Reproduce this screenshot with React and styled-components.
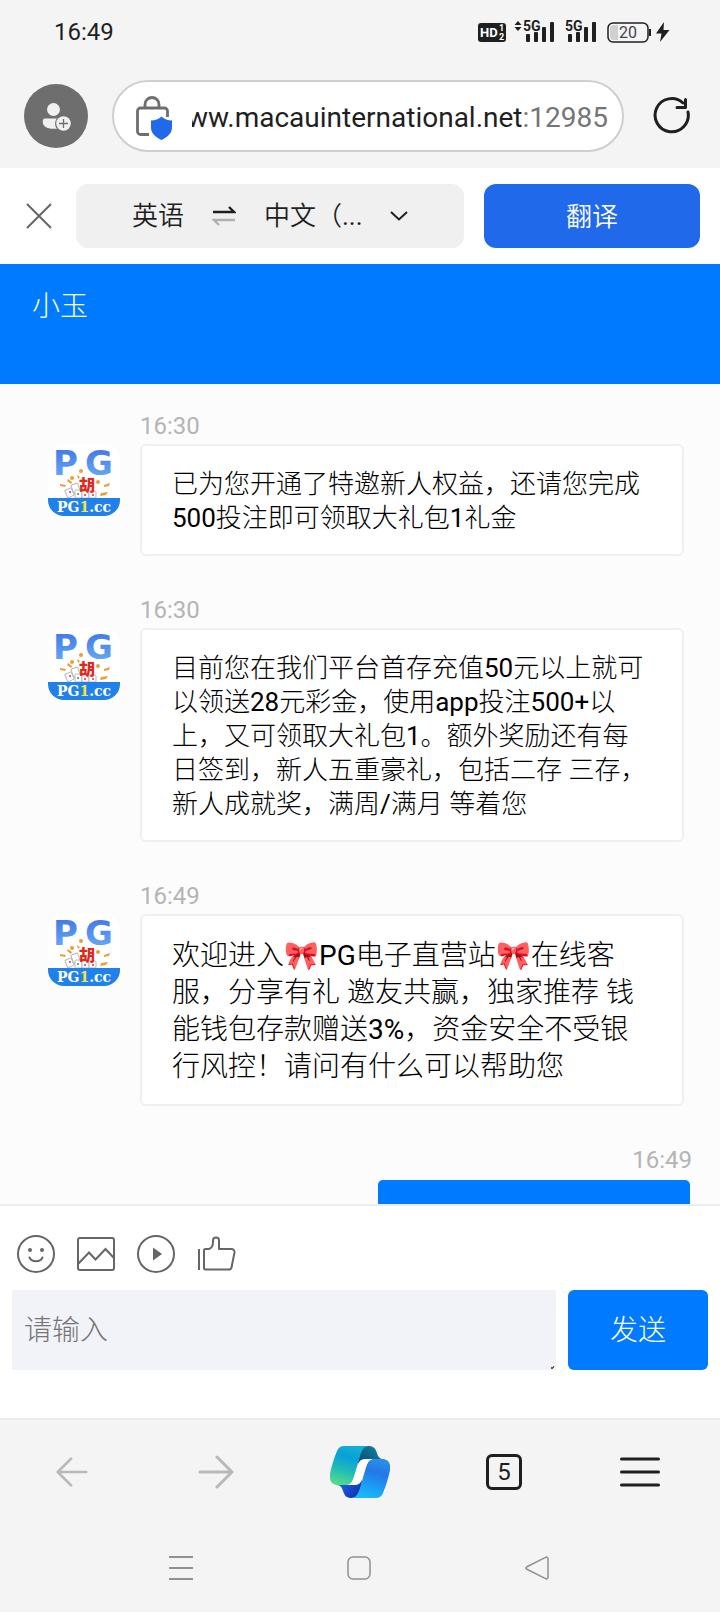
import React from "react";
import styled, { createGlobalStyle } from "styled-components";

const COLORS = {
  chrome: "#f4f4f4",
  chat: "#fcfcfc",
  primary: "#007aff",
  translate: "#2169eb",
  ink: "#1f1f1f",
  gray: "#6e6e6e",
  tool: "#666666",
  time: "#b4b4b4",
  line: "#ececec",
};

const FONT_UI = `Roboto, "Noto Sans CJK SC DemiLight", "Noto Sans CJK SC", sans-serif`;
const FONT_LIGHT = `Roboto, "Noto Sans CJK SC Light", "Noto Sans CJK SC", sans-serif`;

const GlobalStyle = createGlobalStyle`
  *, *::before, *::after {
    box-sizing: border-box;
  }
  body {
    margin: 0;
    background: ${COLORS.chrome};
    color: #000;
    font-family: ${FONT_UI};
  }
  button, select, textarea {
    font: inherit;
    color: inherit;
    margin: 0;
    padding: 0;
    border: none;
    background: none;
  }
  svg {
    display: block;
    flex-shrink: 0;
  }
`;

const Page = styled.div`
  height: 100vh;
  display: flex;
  flex-direction: column;
`;

/* Status bar */

const StatusBar = styled.div`
  display: flex;
  align-items: center;
  justify-content: space-between;
  height: 64px;
  padding: 0 48px 0 54px;
  flex-shrink: 0;
`;

const Clock = styled.time`
  font-size: 24px;
  line-height: 28px;
  color: ${COLORS.ink};
`;

/* Browser bar */

const BrowserBar = styled.header`
  display: flex;
  align-items: center;
  padding: 16px 28px 16px 24px;
  flex-shrink: 0;
`;

const IconButton = styled.button`
  display: flex;
  align-items: center;
  justify-content: center;
  flex-shrink: 0;
  width: ${({ $size }) => $size}px;
  height: ${({ $size }) => $size}px;
`;

const AddressBar = styled.div`
  flex: 1;
  min-width: 0;
  height: 72px;
  margin: 0 28px 0 24px;
  padding: 4px 14px 0 22px;
  display: flex;
  align-items: center;
  gap: 18px;
  background: #fff;
  border: 2px solid #cfcfcf;
  border-radius: 36px;
`;

const Address = styled.a`
  flex: 1;
  min-width: 0;
  display: flex;
  justify-content: flex-end;
  overflow: hidden;
  white-space: nowrap;
  font-size: 28px;
  line-height: 36px;
  color: ${COLORS.ink};
  text-decoration: none;
`;

const Port = styled.span`
  color: #757575;
`;

/* Translate bar */

const TranslateBar = styled.section`
  display: flex;
  align-items: center;
  gap: 18px;
  padding: 16px 20px;
  background: #fff;
  flex-shrink: 0;
`;

const LanguagePicker = styled.div`
  flex: 388;
  height: 64px;
  display: flex;
  align-items: center;
  justify-content: center;
  gap: 28px;
  background: #f0f0f0;
  border-radius: 12px;
  font-size: 26px;
  line-height: 38px;
  color: ${COLORS.ink};
`;

const TargetLanguage = styled.label`
  display: flex;
  align-items: center;
  gap: 24px;
`;

const LanguageSelect = styled.select`
  appearance: none;
  width: 102px;
  line-height: 38px;
`;

const TranslateButton = styled.button`
  flex: 216;
  height: 64px;
  margin-left: 2px;
  padding-top: 2px;
  border-radius: 12px;
  background: ${COLORS.translate};
  color: #fff;
  font-size: 26px;
  line-height: 38px;
`;

/* Chat */

const ChatHeader = styled.div`
  height: 120px;
  padding: 24px 32px;
  background: ${COLORS.primary};
  flex-shrink: 0;
`;

const ChatTitle = styled.h1`
  margin: 0;
  font-family: ${FONT_LIGHT};
  font-size: 28px;
  font-weight: 400;
  line-height: 37px;
  color: #fff;
`;

const MessageList = styled.main`
  flex: 1;
  min-height: 0;
  overflow: hidden;
  padding: 24px 36px 0 48px;
  background: ${COLORS.chat};
`;

const Message = styled.article`
  display: grid;
  grid-template-columns: 72px 1fr;
  column-gap: 20px;
  margin-bottom: 36px;
`;

const MessageTime = styled.time`
  grid-column: 2;
  height: 36px;
  font-size: 24px;
  line-height: 36px;
  color: ${COLORS.time};
`;

const Bubble = styled.p`
  margin: 0;
  padding: 21px 30px 19px;
  min-width: 0;
  background: #fff;
  border: 2px solid #efefef;
  border-radius: 6px;
  font-family: ${FONT_LIGHT};
  font-size: ${({ $large }) => ($large ? 28 : 26)}px;
  line-height: ${({ $large }) => ($large ? 37 : 34)}px;
`;

const OutgoingMessage = styled.article`
  display: flex;
  flex-direction: column;
  align-items: flex-end;
  gap: 2px;
  margin-right: -8px;
`;

const OutgoingBubble = styled.div`
  width: 312px;
  height: 80px;
  margin-right: 2px;
  background: ${COLORS.primary};
  border-radius: 5px;
`;

/* Composer */

const Composer = styled.form`
  padding: 28px 12px 48px;
  background: #fff;
  border-top: 2px solid ${COLORS.line};
  flex-shrink: 0;
`;

const Tools = styled.div`
  display: flex;
  gap: 20px;
  padding: 0 4px;
  margin-bottom: 16px;
`;

const InputRow = styled.div`
  display: flex;
  gap: 12px;
  font-family: ${FONT_LIGHT};
  font-size: 28px;
  line-height: 40px;
`;

const InputBox = styled.label`
  position: relative;
  flex: 1;
  display: flex;
`;

const MessageInput = styled.textarea`
  flex: 1;
  min-width: 0;
  height: 80px;
  padding: 21px 12px 19px;
  resize: none;
  background: #f2f3f8;

  &::placeholder {
    color: #757575;
    opacity: 1;
  }
`;

const ResizeMark = styled.svg`
  position: absolute;
  right: 2px;
  bottom: 0;
`;

const SendButton = styled.button`
  width: 140px;
  height: 80px;
  padding-top: 2px;
  border-radius: 6px;
  background: ${COLORS.primary};
  color: #fff;
`;

/* Bottom bars */

const BrowserNav = styled.nav`
  display: grid;
  grid-template-columns: repeat(5, 1fr);
  align-items: center;
  justify-items: center;
  height: 108px;
  padding-bottom: 2px;
  border-top: 2px solid ${COLORS.line};
  flex-shrink: 0;
`;

const TabCount = styled.button`
  width: 36px;
  height: 36px;
  border: 3px solid ${COLORS.ink};
  border-radius: 6px;
  font-size: 24px;
  line-height: 30px;
  color: ${COLORS.ink};
`;

const MenuButton = styled(IconButton)`
  margin-right: 16px;
`;

const SystemNav = styled.nav`
  display: grid;
  grid-template-columns: repeat(3, 1fr);
  align-items: center;
  justify-items: center;
  height: 86px;
  padding: 0 94px 2px 92px;
  flex-shrink: 0;
`;

const SignalBars = ({ x }) => (
  <g fill={COLORS.ink}>
    <rect x={x} y="15" width="4" height="8" rx="1" />
    <rect x={x + 8} y="13" width="4" height="10" rx="1" />
    <rect x={x + 16} y="8" width="4" height="15" rx="1" />
    <rect x={x + 24} y="3" width="4" height="20" rx="1" />
  </g>
);

const StatusIcons = () => (
  <svg width="194" height="26" viewBox="0 0 194 26" fontFamily="Roboto, sans-serif">
    <rect x="0" y="4" width="28" height="19" rx="3" fill={COLORS.ink} />
    <text x="2" y="18" fontSize="13" fontWeight="700" fill="#fff">HD</text>
    <text x="21" y="12" fontSize="9" fontWeight="700" fill="#fff">1</text>
    <text x="21" y="21" fontSize="9" fontWeight="700" fill="#fff">2</text>
    <path d="M36.500 6l3.500-4 3.500 4zM36.500 8h7l-3.500 4z" fill={COLORS.ink} />
    <text x="45" y="12" fontSize="14" fontWeight="700" fill={COLORS.ink}>5G</text>
    <SignalBars x={48} />
    <text x="87" y="12" fontSize="14" fontWeight="700" fill={COLORS.ink}>5G</text>
    <SignalBars x={90} />
    <rect x="130" y="4" width="40" height="19" rx="5" fill="none" stroke={COLORS.ink} strokeWidth="1.500" />
    <path d="M136 6h4v15h-4a4 4 0 0 1-4-4v-7a4 4 0 0 1 4-4z" fill="#d0d0d0" />
    <text x="150" y="19" fontSize="16" textAnchor="middle" fill="#444">20</text>
    <path d="M172 10v7" stroke={COLORS.ink} strokeWidth="2" />
    <path d="M186 3l-8 11.500h5.500L182 23l9.500-12h-6z" fill={COLORS.ink} />
  </svg>
);

const ProfileIcon = () => (
  <svg width="64" height="64" viewBox="0 0 64 64">
    <circle cx="32" cy="32" r="32" fill={COLORS.gray} />
    <circle cx="29.500" cy="25.500" r="6.500" fill="#f0f0f0" />
    <path d="M21 34.500h18v10.300H29c-6 0-10.300-2.500-10.300-7 0-2 .6-3.300 2.300-3.300z" fill="#f0f0f0" />
    <circle cx="39.500" cy="39.500" r="8.500" fill={COLORS.gray} />
    <circle cx="39.500" cy="39.500" r="7.300" fill="#f0f0f0" />
    <path d="M39.500 35v9M35 39.500h9" stroke={COLORS.gray} strokeWidth="1.300" />
  </svg>
);

const SecureIcon = () => (
  <svg width="38" height="46" viewBox="0 0 38 46" fill="none">
    <path
      d="M9 13V9.500a7 7 0 0 1 14 0V13M13 39.500H4.500a3 3 0 0 1-3-3V16a3 3 0 0 1 3-3h24a3 3 0 0 1 3 3v6"
      stroke={COLORS.gray}
      strokeWidth="2.800"
    />
    <path d="M25.500 21.500c3 2.700 6 4 10.500 4v7c0 6-5 10-10.500 12.500C20 42.500 15 38.500 15 32.500v-7c4.500 0 7.500-1.300 10.500-4z" fill="#2169eb" />
  </svg>
);

const ReloadIcon = () => (
  <svg width="40" height="40" viewBox="0 0 40 40" fill="none" stroke={COLORS.ink} strokeWidth="3">
    <path d="M36 16a16.600 16.600 0 1 1-5-9" strokeLinecap="round" />
    <path d="M33.500 3.500v8H25" strokeLinejoin="round" strokeLinecap="round" />
  </svg>
);

const CloseIcon = () => (
  <svg width="26" height="26" viewBox="0 0 26 26">
    <path d="M1 1l24 24M25 1L1 25" stroke="#666" strokeWidth="2" />
  </svg>
);

const SwapIcon = () => (
  <svg width="24" height="22" viewBox="0 0 24 22">
    <path d="M1 7h21L17 2" stroke={COLORS.ink} strokeWidth="2.400" fill="none" />
    <path d="M23 15H2l5 5" stroke="#b0b0b0" strokeWidth="2.400" fill="none" />
  </svg>
);

const ChevronIcon = () => (
  <svg width="18" height="12" viewBox="0 0 18 12">
    <path d="M1 2l8 7.500L17 2" stroke={COLORS.ink} strokeWidth="2" fill="none" />
  </svg>
);

const BrandAvatar = () => (
  <svg width="72" height="72" viewBox="0 0 72 72" role="img" aria-label="PG1.cc">
    <defs>
      <linearGradient id="pg" x1="0" y1="0" x2="0" y2="1">
        <stop offset="0" stopColor="#3b6fe6" />
        <stop offset="1" stopColor="#6db2f5" />
      </linearGradient>
      <clipPath id="tile">
        <rect width="72" height="72" rx="16" />
      </clipPath>
    </defs>
    <g clipPath="url(#tile)">
      <rect width="72" height="72" fill="#fff" />
      <g fontFamily="DejaVu Sans, sans-serif" fontWeight="700" fontSize="34" fill="url(#pg)">
        <text x="5" y="31">P</text>
        <text x="37" y="31">G</text>
      </g>
      <g fill="#e5a13a">
        <circle cx="33" cy="27" r="2" />
        <circle cx="24" cy="34" r="2" />
        <circle cx="50" cy="38" r="2" />
        <path d="M12 40l6 1-1 2-5-1zM56 41l6-2-1 3-5 1zM53 49l7-1-2 3-6 1z" />
        <path d="M20 35l4 3-1 2-4-3zM29 31l3 2-2 2z" />
      </g>
      <g fill="#fff" stroke="#b4b8c0" strokeWidth="1">
        <rect x="18" y="45" width="7" height="8" rx="1" transform="rotate(-25 21 49)" />
        <rect x="24" y="40" width="7" height="9" rx="1" transform="rotate(-20 27 44)" />
        <rect x="27" y="46" width="7" height="8" rx="1" />
        <rect x="34" y="47" width="7" height="7" rx="1" />
        <rect x="41" y="47" width="7" height="7" rx="1" />
      </g>
      <g fill="#d83a2e">
        <circle cx="22" cy="48" r="1" />
        <circle cx="37" cy="51" r="1" />
        <circle cx="45" cy="51" r="1" />
      </g>
      <circle cx="30" cy="50" r="1" fill="#2f9b55" />
      <text
        x="39"
        y="47"
        textAnchor="middle"
        fontFamily="Noto Sans CJK SC, sans-serif"
        fontWeight="900"
        fontSize="16"
        fill="#e0281c"
      >
        胡
      </text>
      <rect y="54" width="72" height="18" fill="#2181ea" />
      <text
        x="36"
        y="68"
        textAnchor="middle"
        fontFamily="DejaVu Serif, serif"
        fontWeight="700"
        fontSize="14"
        fill="#fff"
      >
        PG<tspan fill="#f4e542">1</tspan>.cc
      </text>
    </g>
  </svg>
);

const SmileIcon = () => (
  <svg width="40" height="40" viewBox="0 0 40 40" fill="none" stroke={COLORS.tool} strokeWidth="2">
    <circle cx="20" cy="20" r="18" />
    <circle cx="14" cy="16" r="2" fill={COLORS.tool} stroke="none" />
    <circle cx="26" cy="16" r="2" fill={COLORS.tool} stroke="none" />
    <path d="M13.500 23.500c2.500 5 10.500 5 13 0" strokeLinecap="round" />
  </svg>
);

const ImageIcon = () => (
  <svg width="40" height="40" viewBox="0 0 40 40" fill="none" stroke={COLORS.tool} strokeWidth="2">
    <rect x="2" y="4" width="36" height="32" rx="2" />
    <path d="M2 30l11-11.500 6.500 7L29.500 15l8.500 9" />
  </svg>
);

const PlayIcon = () => (
  <svg width="40" height="40" viewBox="0 0 40 40">
    <circle cx="20" cy="20" r="18" fill="none" stroke={COLORS.tool} strokeWidth="2" />
    <path d="M17 13.500v13l9-6.500z" fill={COLORS.tool} />
  </svg>
);

const ThumbIcon = () => (
  <svg width="40" height="40" viewBox="0 0 40 40" fill="none" stroke={COLORS.tool} strokeWidth="2">
    <path d="M3 15v21" />
    <path
      d="M8 16.500a1.500 1.500 0 0 1 1.500-1.500h3.500c3-1 4-3 4-7V6.500a3 3 0 0 1 6 0V15h12.500a3 3 0 0 1 3 3.500l-3 15a2.500 2.500 0 0 1-2.500 2H9.500A1.500 1.500 0 0 1 8 34z"
      strokeLinejoin="round"
    />
  </svg>
);

const ArrowIcon = ({ size, flip }) => (
  <svg width={size} height={size} viewBox="0 0 36 36" fill="none">
    <path
      d={flip ? "M34 18H2M17 3L2 18l15 15" : "M2 18h32M19 3l15 15-15 15"}
      stroke="#b9b9b9"
      strokeWidth="3"
      strokeLinecap="round"
      strokeLinejoin="round"
    />
  </svg>
);

const CopilotIcon = () => (
  <svg width="60" height="52" viewBox="0 0 60 52">
    <defs>
      <linearGradient id="ribbonLeft" x1="0.600" y1="0" x2="0.300" y2="1">
        <stop offset="0" stopColor="#12b0d6" />
        <stop offset="0.300" stopColor="#0a9fd8" />
        <stop offset="0.650" stopColor="#21bdb5" />
        <stop offset="1" stopColor="#58d98c" />
      </linearGradient>
      <linearGradient id="ribbonRight" x1="0.600" y1="0" x2="0.300" y2="1">
        <stop offset="0" stopColor="#2b8de9" />
        <stop offset="0.300" stopColor="#2377e8" />
        <stop offset="0.700" stopColor="#1aa0f6" />
        <stop offset="1" stopColor="#19bdf2" />
      </linearGradient>
      <linearGradient id="foldTop" x1="0" y1="0.800" x2="1" y2="0">
        <stop offset="0" stopColor="#064a72" />
        <stop offset="1" stopColor="#1689a5" />
      </linearGradient>
      <linearGradient id="foldBottom" x1="0" y1="0" x2="1" y2="0.600">
        <stop offset="0" stopColor="#1b70f2" />
        <stop offset="1" stopColor="#1433b4" />
      </linearGradient>
    </defs>
    <path d="M28 16C30 5 32 0 38 0c6 0 7 2 9 7 1 4 3 6 6 6H37c-4 0-5 2-7 8z" fill="url(#foldTop)" />
    <path d="M32 36c-2 11-4 16-10 16-6 0-7-2-9-7-1-4-3-6-6-6h16c4 0 5-2 7-8z" fill="url(#foldBottom)" />
    <path d="M14 0h25c-5 0-7 4-9 10l-6 21c-2 6-4 8-8 8H8c-6 0-9-4-8-11C2 18 5 10 7 5c1.500-3.500 3.500-5 7-5z" fill="url(#ribbonLeft)" />
    <path d="M46 52H21c5 0 7-4 9-10l6-21c2-6 4-8 8-8h8c6 0 9 4 8 11-2 10-5 18-7 23-1.500 3.500-3.500 5-7 5z" fill="url(#ribbonRight)" />
    <path d="M24 31l4-12c1.300-4.500 3.500-6 8-6h8c-4 0-6 2-8 8l-4 12c-1.300 4.500-3.500 6-8 6h-8c4 0 6-2 8-8z" fill="#fff" />
  </svg>
);

const MenuIcon = () => (
  <svg width="40" height="32" viewBox="0 0 40 32">
    <path d="M1.500 3h37M1.500 16h37M1.500 29h37" stroke={COLORS.ink} strokeWidth="3" strokeLinecap="round" />
  </svg>
);

const messages = [
  { time: "16:30", text: "已为您开通了特邀新人权益，还请您完成500投注即可领取大礼包1礼金" },
  {
    time: "16:30",
    text:
      "目前您在我们平台首存充值50元以上就可以领送28元彩金，使用app投注500+以上，又可领取大礼包1。额外奖励还有每日签到，新人五重豪礼，包括二存 三存，新人成就奖，满周/满月 等着您",
  },
  {
    time: "16:49",
    large: true,
    text:
      "欢迎进入🎀PG电子直营站🎀在线客服，分享有礼 邀友共赢，独家推荐 钱能钱包存款赠送3%，资金安全不受银行风控！请问有什么可以帮助您",
  },
];

const tools = [
  { label: "表情", Icon: SmileIcon },
  { label: "图片", Icon: ImageIcon },
  { label: "视频", Icon: PlayIcon },
  { label: "点赞", Icon: ThumbIcon },
];

const App = () => {
  return (
    <Page lang="zh-CN">
      <GlobalStyle />
      <StatusBar>
        <Clock>16:49</Clock>
        <StatusIcons />
      </StatusBar>

      <BrowserBar>
        <IconButton $size={64} aria-label="个人资料">
          <ProfileIcon />
        </IconButton>
        <AddressBar>
          <SecureIcon />
          <Address href="#">
            <span>ww.macauinternational.net</span>
            <Port>:12985</Port>
          </Address>
        </AddressBar>
        <IconButton $size={40} aria-label="刷新">
          <ReloadIcon />
        </IconButton>
      </BrowserBar>

      <TranslateBar>
        <IconButton $size={38} aria-label="关闭">
          <CloseIcon />
        </IconButton>
        <LanguagePicker>
          <button>英语</button>
          <button aria-label="切换语言">
            <SwapIcon />
          </button>
          <TargetLanguage>
            <LanguageSelect aria-label="目标语言">
              <option>中文（...</option>
            </LanguageSelect>
            <ChevronIcon />
          </TargetLanguage>
        </LanguagePicker>
        <TranslateButton>翻译</TranslateButton>
      </TranslateBar>

      <ChatHeader>
        <ChatTitle>小玉</ChatTitle>
      </ChatHeader>

      <MessageList>
        {messages.map(({ time, text, large }, index) => (
          <Message key={index}>
            <MessageTime>{time}</MessageTime>
            <BrandAvatar />
            <Bubble $large={large}>{text}</Bubble>
          </Message>
        ))}
        <OutgoingMessage>
          <MessageTime>16:49</MessageTime>
          <OutgoingBubble />
        </OutgoingMessage>
      </MessageList>

      <Composer onSubmit={(event) => event.preventDefault()}>
        <Tools>
          {tools.map(({ label, Icon }) => (
            <IconButton key={label} type="button" $size={40} aria-label={label}>
              <Icon />
            </IconButton>
          ))}
        </Tools>
        <InputRow>
          <InputBox>
            <MessageInput placeholder="请输入" aria-label="请输入" />
            <ResizeMark width="3" height="4" viewBox="0 0 3 4">
              <path d="M0 1h2v2H0zM2 0h1v2H2z" fill="#555" />
            </ResizeMark>
          </InputBox>
          <SendButton type="submit">发送</SendButton>
        </InputRow>
      </Composer>

      <BrowserNav>
        <IconButton $size={44} aria-label="后退">
          <ArrowIcon size={32} flip />
        </IconButton>
        <IconButton $size={44} aria-label="前进">
          <ArrowIcon size={36} />
        </IconButton>
        <IconButton $size={60} aria-label="Copilot">
          <CopilotIcon />
        </IconButton>
        <TabCount>5</TabCount>
        <MenuButton $size={40} aria-label="菜单">
          <MenuIcon />
        </MenuButton>
      </BrowserNav>

      <SystemNav>
        <IconButton $size={40} aria-label="最近任务">
          <svg width="24" height="24" viewBox="0 0 24 24">
            <path d="M0 1h24M0 12h24M0 23h24" stroke="#909090" strokeWidth="2" />
          </svg>
        </IconButton>
        <IconButton $size={40} aria-label="主屏幕">
          <svg width="24" height="24" viewBox="0 0 24 24">
            <rect x="1" y="1" width="22" height="22" rx="5" fill="none" stroke="#909090" strokeWidth="1.500" />
          </svg>
        </IconButton>
        <IconButton $size={40} aria-label="返回">
          <svg width="24" height="24" viewBox="0 0 24 24">
            <path
              d="M21 1.200a1.500 1.500 0 0 1 2 1.300v19a1.500 1.500 0 0 1-2 1.300L1.500 13a1.200 1.200 0 0 1 0-2z"
              fill="none"
              stroke="#909090"
              strokeWidth="1.500"
            />
          </svg>
        </IconButton>
      </SystemNav>
    </Page>
  );
};

export default App;
